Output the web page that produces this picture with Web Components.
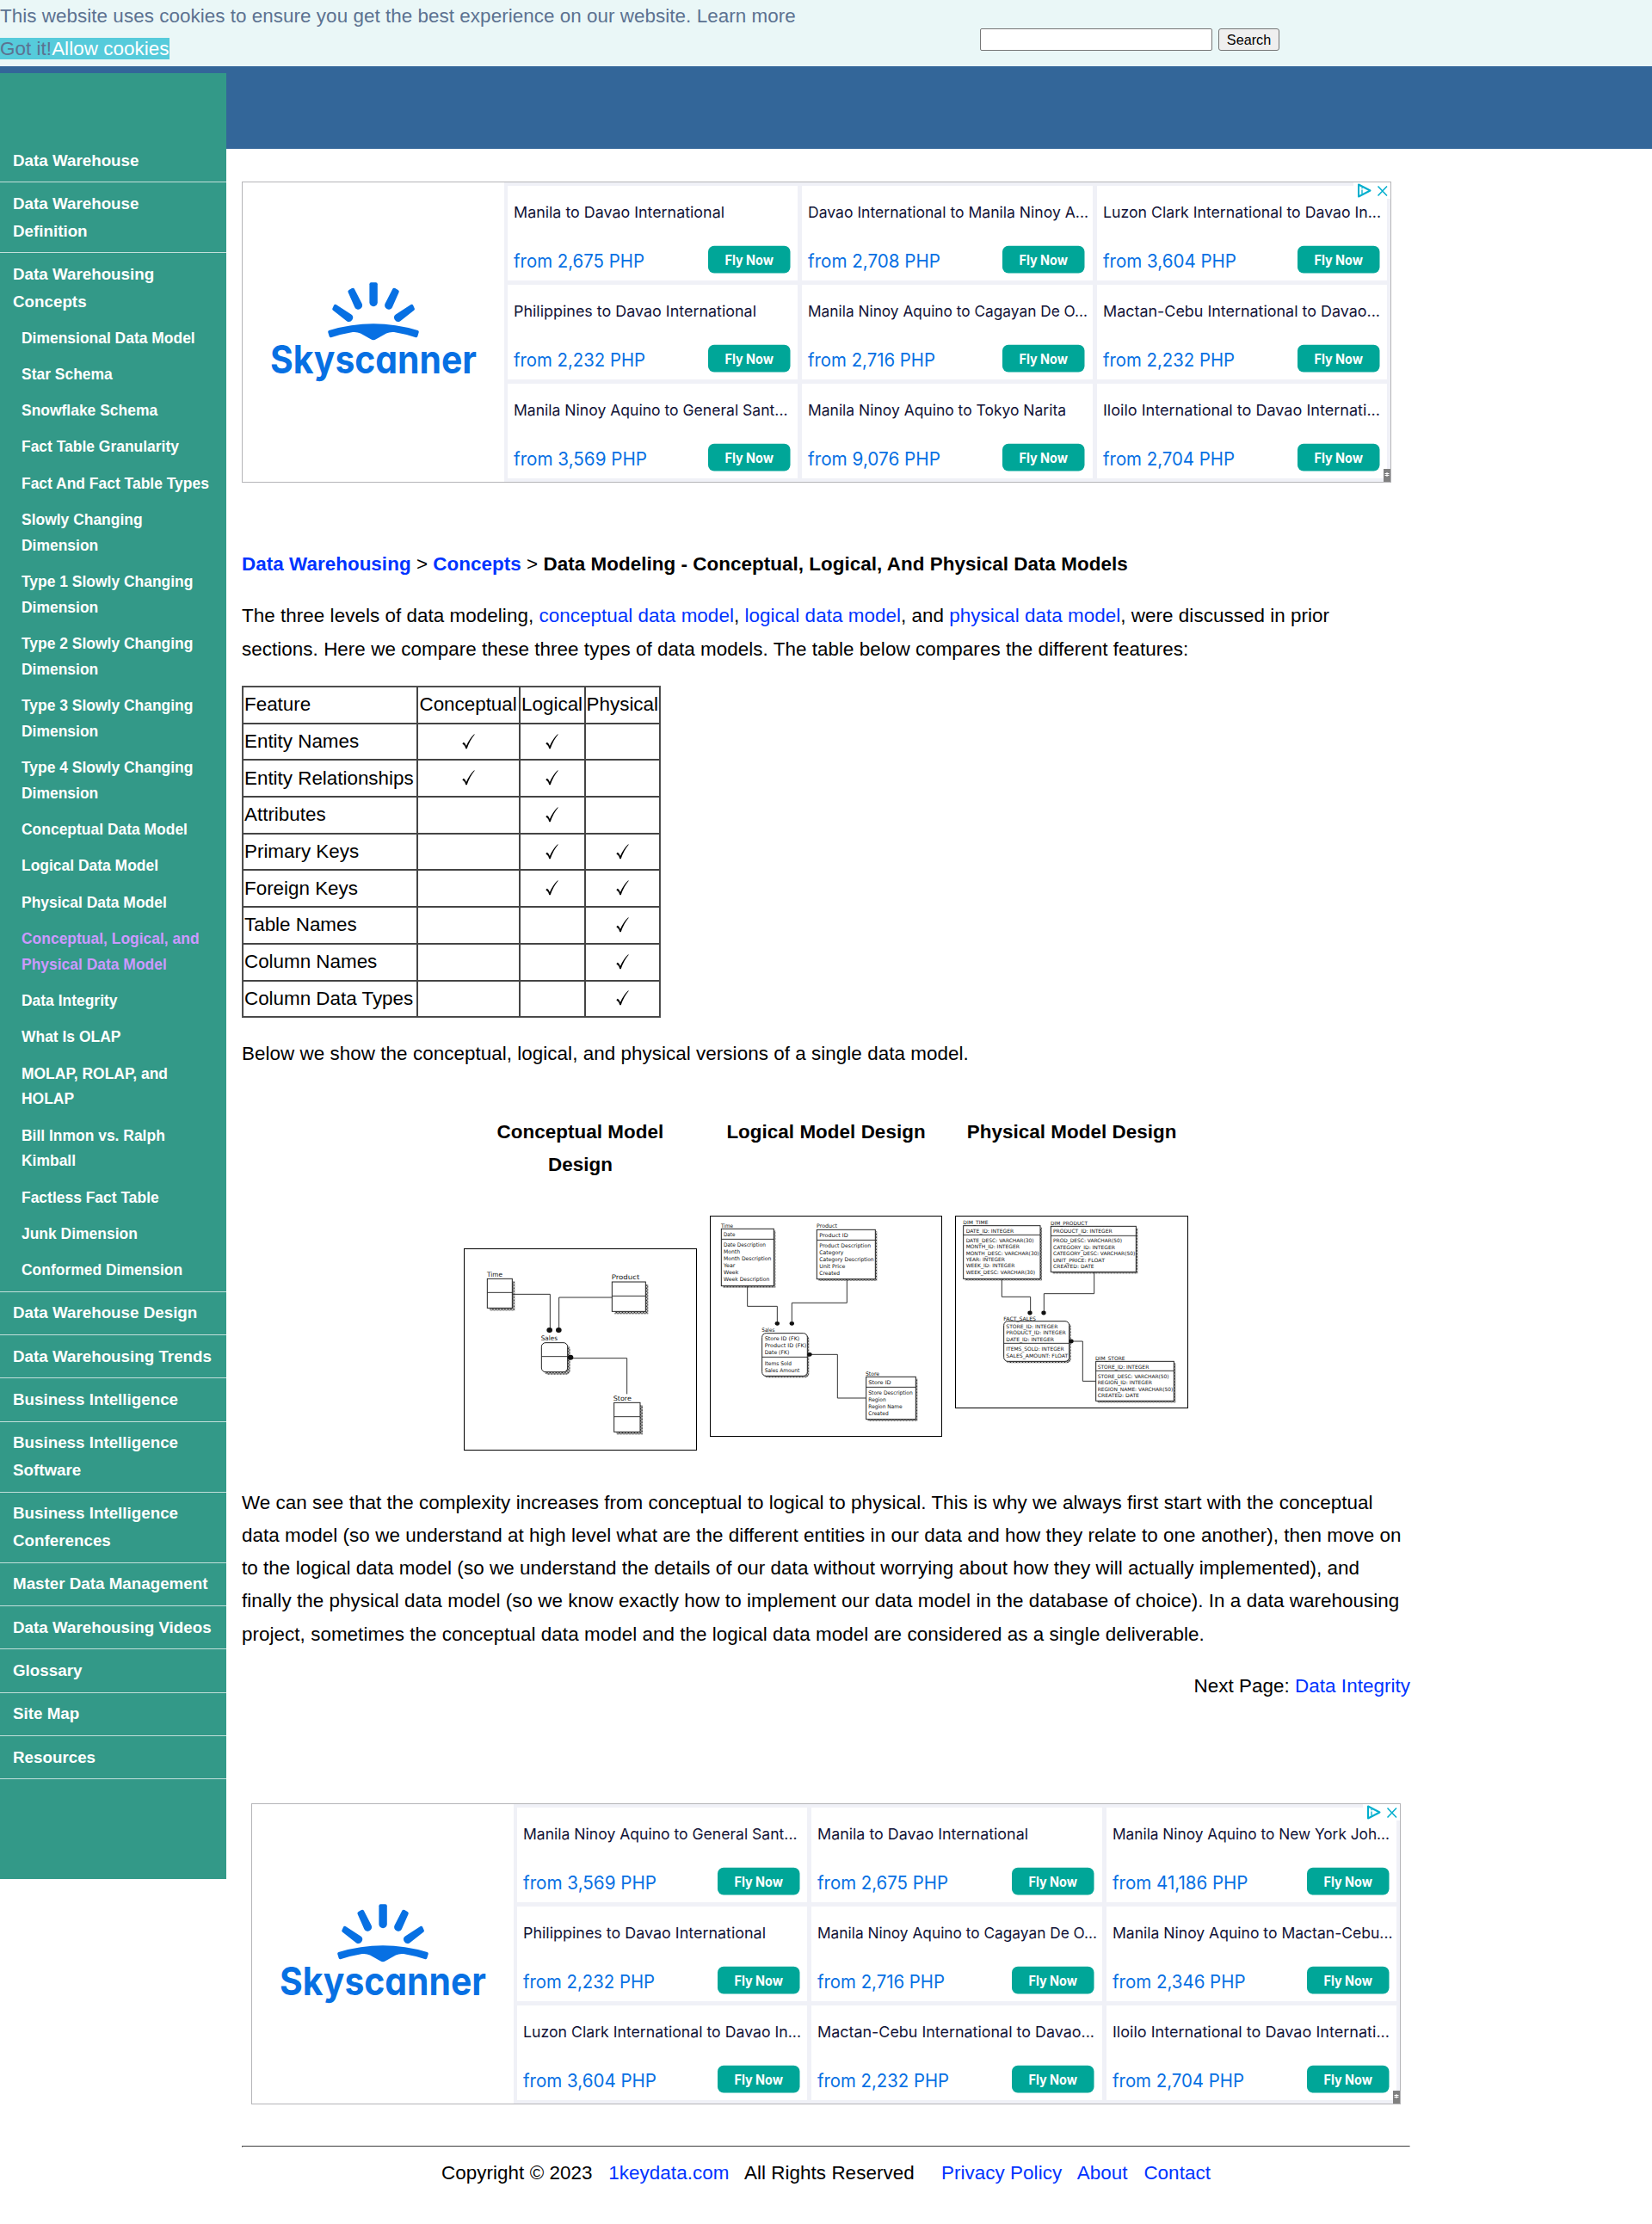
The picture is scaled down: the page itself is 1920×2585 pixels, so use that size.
<!DOCTYPE html>
<html lang="en">
<head>
<meta charset="utf-8">
<title>Data Modeling - Conceptual, Logical, And Physical Data Models</title>
<style>
body{margin:0;background:#fff;color:#000;font:22.4px/38.08px "Liberation Sans",Arial,sans-serif;letter-spacing:.055px}
</style>
</head>
<body>
<key-page></key-page>
<script>
const define=(name,html,setup)=>customElements.define(name,class extends HTMLElement{
  connectedCallback(){
    if(this.shadowRoot)return;
    const t=document.createElement('template');
    t.innerHTML=html;
    this.attachShadow({mode:'open'}).append(t.content.cloneNode(true));
    if(setup)setup(this,this.shadowRoot);
  }
});

define('cookie-bar',`<style>
:host{display:flex;height:77px;background:#eaf7f7;color:#5c7291}
.msg{flex:0 0 1139px}
.btn{background:#56cbdb}.allow{color:#fff}
form{display:flex;gap:7px;padding-top:33px;height:26px}
input{box-sizing:border-box;width:270px;height:26px;border:1px solid #767676;border-radius:2px;background:#fff;padding:0}
button{box-sizing:border-box;width:71px;height:26px;border:1px solid #767676;border-radius:3px;background:#efefef;color:#000;padding:0;font:16.2px "Liberation Sans",Arial,sans-serif}
</style><div class="msg"><div>This website uses cookies to ensure you get the best experience on our website. Learn more</div><div><span class="btn">Got it!</span><span class="btn allow">Allow cookies</span></div></div>
<form><input type="text"><button type="button">Search</button></form>`);

define('nav-item',`<style>
:host{display:block;padding:8.8px 0 8.8px 15px;border-bottom:1px solid #c2dfda;font:bold 18.8px/31.73px "Liberation Sans",Arial,sans-serif;letter-spacing:0;color:#fff}
</style><slot></slot>`);
define('nav-sub',`<style>
:host{display:block;padding:6.28px 0 6.28px 10px;font:bold 17.47px/29.75px "Liberation Sans",Arial,sans-serif}
:host([active]){color:#c9f}
:host(:first-of-type){margin-top:5.6px}
:host(:last-of-type){margin-bottom:-6.4px}
</style><slot></slot>`);
define('side-nav',`<style>
:host{display:block;box-sizing:border-box;background:#398;padding-top:77px}
</style>
<nav-item>Data Warehouse</nav-item>
<nav-item>Data Warehouse<br>Definition</nav-item>
<nav-item>Data Warehousing<br>Concepts
<nav-sub>Dimensional Data Model</nav-sub><nav-sub>Star Schema</nav-sub><nav-sub>Snowflake Schema</nav-sub><nav-sub>Fact Table Granularity</nav-sub><nav-sub>Fact And Fact Table Types</nav-sub><nav-sub>Slowly Changing<br>Dimension</nav-sub><nav-sub>Type 1 Slowly Changing<br>Dimension</nav-sub><nav-sub>Type 2 Slowly Changing<br>Dimension</nav-sub><nav-sub>Type 3 Slowly Changing<br>Dimension</nav-sub><nav-sub>Type 4 Slowly Changing<br>Dimension</nav-sub><nav-sub>Conceptual Data Model</nav-sub><nav-sub>Logical Data Model</nav-sub><nav-sub>Physical Data Model</nav-sub><nav-sub active>Conceptual, Logical, and<br>Physical Data Model</nav-sub><nav-sub>Data Integrity</nav-sub><nav-sub>What Is OLAP</nav-sub><nav-sub>MOLAP, ROLAP, and<br>HOLAP</nav-sub><nav-sub>Bill Inmon vs. Ralph<br>Kimball</nav-sub><nav-sub>Factless Fact Table</nav-sub><nav-sub>Junk Dimension</nav-sub><nav-sub>Conformed Dimension</nav-sub></nav-item>
<nav-item>Data Warehouse Design</nav-item><nav-item>Data Warehousing Trends</nav-item><nav-item>Business Intelligence</nav-item><nav-item>Business Intelligence<br>Software</nav-item><nav-item>Business Intelligence<br>Conferences</nav-item><nav-item>Master Data Management</nav-item><nav-item>Data Warehousing Videos</nav-item><nav-item>Glossary</nav-item><nav-item>Site Map</nav-item><nav-item>Resources</nav-item>`);

/* Text stretched to a given width, so that the substitute face keeps the brand face's measure. */
const fitted=(x,y,w,text)=>`<text x="${x}" y="${y}" textLength="${w}" lengthAdjust="spacingAndGlyphs">${text}</text>`;

define('fare-card',`<style>
:host{display:block;background:#fff;letter-spacing:0}
svg{display:block;overflow:visible;font-family:Inter,sans-serif}
.t{font-size:17.6px;fill:#111236}.p{font-size:21px;fill:#0770e3}.b{font-size:16px;font-weight:700;fill:#fff}
</style><svg width="337" height="110"></svg>`,(el,root)=>{
  const [t,tw,p,pw]=el.getAttribute('fare').split('|');
  root.querySelector('svg').innerHTML=`<g class="t">${fitted(7,36.6,tw,t)}</g><g class="p">${fitted(7,94.8,pw,'from '+p+' PHP')}</g><rect x="233" y="69.7" width="95.5" height="31.8" rx="7" fill="#00a698"/><g class="b">${fitted(252.5,92.3,56.5,'Fly Now')}</g>`;
});

define('fare-ad',`<style>
:host{display:flex;box-sizing:border-box;width:1336px;height:350px;border:1px solid #b5b5b8;position:relative;background:#fff;letter-spacing:0}
.logo{flex:0 0 304px;height:348px}
.logo text{font:700 45px Inter,sans-serif;font-feature-settings:"cv11","ss03"}
.grid{flex:1;display:grid;grid-template-columns:repeat(3,337.4px);grid-auto-rows:110px;gap:5px;padding:4px;background:#f0f1f7}
.choices{position:absolute;right:0;top:0}
.mark{position:absolute;right:0;bottom:0}
</style>
<svg class="logo" viewBox="0 0 304 348" fill="#0770e3"><path d="M147.400 118.300q0-2 2-2h5.400q2 0 2 2v21.200a4.700 4.700 0 0 1-9.400 0z"/>
<g id="rays"><path d="M122.600 127.800q-.8-1.800 1-2.800l3.400-1.900q2-.9 3 .9l8.700 17a4.700 4.700 0 0 1-8.400 4.200z"/><path d="M104.800 148.500q-.9-.8-.4-2l1.700-3.700q.9-1.600 2.500-.7l17.700 11.400a4.700 4.700 0 0 1-5 7.900z"/></g>
<g transform="matrix(-1 0 0 1 304.200 0)"><path d="M122.600 127.800q-.8-1.800 1-2.800l3.400-1.900q2-.9 3 .9l8.700 17a4.700 4.700 0 0 1-8.400 4.200z"/><path d="M104.800 148.500q-.9-.8-.4-2l1.700-3.700q.9-1.600 2.500-.7l17.700 11.400a4.700 4.700 0 0 1-5 7.900z"/></g>
<path d="M100.500 172Q152 156.500 203.500 172Q205 172.500 204.800 174L203.300 179Q202.500 180.700 200.500 180Q188 176 176 174Q171 173.500 167 175.500L155 182.300Q152 184 149 182.300L137 175.500Q133 173.500 128 174Q116 176 103.500 180Q101.500 180.700 100.700 179L99.200 174Q99 172.500 100.500 172z"/>
<text x="32" y="221.800" textLength="240" lengthAdjust="spacingAndGlyphs">Skyscanner</text></svg>
<div class="grid"></div>
<svg class="choices" width="43" height="19"><rect width="43" height="19" fill="#fff"/><path d="M6 2.500v14l13.500-7z" fill="none" stroke="#00aecd" stroke-width="2" stroke-linejoin="round"/><path d="M10 8.500v5M10 6v1.200" stroke="#00aecd" stroke-width="1.300"/><path d="M28.500 4.500l10.500 11M39 4.500L28.500 15.500" stroke="#00aecd" stroke-width="1.500"/></svg>
<svg class="mark" width="8" height="15"><rect width="8" height="15" fill="#808080"/><path d="M4 4v5M1.500 5.500h5M1.500 7.500h5" stroke="#fff"/></svg>`,
(el,root)=>{
  root.querySelector('.grid').innerHTML=el.getAttribute('fares').split(';').map(f=>`<fare-card fare="${f}"></fare-card>`).join('');
});

define('er-diagram',`<style>
:host{display:block;font-weight:400;letter-spacing:0}svg{display:block;font-family:"DejaVu Sans",sans-serif;box-sizing:border-box;border:1px solid #000}
</style>`,(el,root)=>{
  const d=diagrams[el.getAttribute('model')];
  const [ox,oy,w,h]=d.view;
  let s=`<defs><pattern id="dots" width="4.200" height="4.200" patternUnits="userSpaceOnUse"><path d="M0 0h2.100v2.100h-2.100zM2.100 2.100h2.100v2.100h-2.100z" fill="#111"/></pattern></defs>`;
  const shape=(x1,y1,x2,y2,r,o,f)=>`<rect x="${x1+o}" y="${y1+o}" width="${x2-x1}" height="${y2-y1}" rx="${r}" ${f}/>`;
  for(const [title,tx,ty,tw,x1,y1,x2,y2,div,r,rx,...rows] of d.entities){
    s+=shape(x1,y1,x2,y2,r,d.shadow,'fill="url(#dots)"')+shape(x1,y1,x2,y2,r,0,'fill="#fff" stroke="#222" stroke-width="3"');
    s+=`<path d="M${x1} ${div}H${x2}" stroke="#333" stroke-width="3"/>`+fitted(tx,ty,tw,title);
    for(const [t,tw2,y] of rows)s+=fitted(rx,y,tw2,t);
  }
  for(const p of d.lines)s+=`<path d="M${p}" fill="none" stroke="#333" stroke-width="3"/>`;
  for(const [x,y] of d.dots)s+=`<ellipse cx="${x}" cy="${y}" rx="${d.dot}" ry="${d.dot*.9}"/>`;
  root.innerHTML+=`<svg width="${w/3}" height="${h/3}" viewBox="${ox+3} ${oy+3} ${w-6} ${h-6}" font-size="${d.size}" fill="#111">${s}</svg>`;
});
const diagrams={
conceptual:{view:[27,483,813,705],size:23,shadow:9,dot:10,entities:[
 ['Time',108,582,54,109,589,196,691,637,0,0],
 ['Product',542,592,98,544,600,661,703,649,0,0],
 ['Sales',296,805,58,298,812,389,914,860,14,0],
 ['Store',548,1015,64,551,1021,642,1123,1070,0,0]],
 lines:['196 643H328V768','544 654H359V768','596 991V866H399'],dots:[[326,768],[358,768],[399,863]]},
logical:{view:[15,69,810,771],size:19,shadow:6,dot:8,entities:[
 ['Time',54,110,42,55,115,238,314,151,0,63,['Date',40,140],['Date Description',147,177],['Month',57,201],['Month Description',166,225],['Year',40,249],['Week',52,274],['Week Description',160,298]],
 ['Product',387,112,72,388,118,592,290,154,0,397,['Product ID',100,143],['Product Description',179,180],['Category',84,204],['Category Description',190,228],['Unit Price',90,252],['Created',71,276]],
 ['Sales',196,473,45,197,479,355,628,562,14,206,['Store ID (FK)',122,504],['Product ID (FK)',146,528],['Date (FK)',86,552],['Items Sold',94,590],['Sales Amount',122,615]],
 ['Store',558,626,48,560,631,733,779,667,0,568,['Store ID',79,656],['Store Description',154,692],['Region',61,716],['Region Name',118,741],['Created',70,765]]],
 lines:['146 314V385H250V445','493 290V373H301V445','560 705H460V553H363'],dots:[[250,445],[301,445],[363,553]]},
physical:{view:[30,69,813,672],size:18,shadow:6,dot:8,entities:[
 ['DIM_TIME',58,100,88,59,104,327,289,136,0,68,['DATE_ID: INTEGER',167,129],['DATE_DESC: VARCHAR(30)',237,161],['MONTH_ID: INTEGER',187,183],['MONTH_DESC: VARCHAR(30)',255,206],['YEAR: INTEGER',136,227],['WEEK_ID: INTEGER',170,250],['WEEK_DESC: VARCHAR(30)',241,272]],
 ['DIM_PRODUCT',363,102,129,364,106,661,265,139,0,372,['PRODUCT_ID: INTEGER',206,130],['PROD_DESC: VARCHAR(50)',240,163],['CATEGORY_ID: INTEGER',216,186],['CATEGORY_DESC: VARCHAR(50)',286,208],['UNIT_PRICE: FLOAT',180,230],['CREATED: DATE',143,252]],
 ['FACT_SALES',199,434,113,200,437,428,577,514,14,208,['STORE_ID: INTEGER',180,461],['PRODUCT_ID: INTEGER',208,484],['DATE_ID: INTEGER',167,506],['ITEMS_SOLD: INTEGER',202,541],['SALES_AMOUNT: FLOAT',216,563]],
 ['DIM_STORE',519,574,104,521,577,793,715,610,0,527,['STORE_ID: INTEGER',179,602],['STORE_DESC: VARCHAR(50)',249,635],['REGION_ID: INTEGER',190,657],['REGION_NAME: VARCHAR(50)',263,680],['CREATED: DATE',145,702]]],
 lines:['193 289V352H293V408','515 265V341H340V408','521 646H475V507H435'],dots:[[291,408],[339,408],[435,507]]}
};

define('check-mark',`<style>:host{display:inline-block;vertical-align:middle;margin-bottom:3px}svg{display:block}</style>
<svg width="15" height="18" viewBox="0 0 15 18" role="img" aria-label="yes"><path d="M.3 11.200L1.900 9.800Q4 11.200 4.900 14Q8.500 5.500 14.200.2L14.700.7Q8.800 7.500 5.700 17.300H4.300Q3.100 12.800.3 11.200z"/></svg>`);

define('feature-table',`<style>
:host{display:block;height:386.400px;margin-top:23.400px}
table{border-collapse:separate;border-spacing:0;border:1px solid #555;box-sizing:border-box;width:487px;height:386px;letter-spacing:0}
td{border:1px solid #444;padding:0 1px;height:42.700px;box-sizing:border-box;line-height:38px}
td+td{text-align:center}
</style><table><colgroup><col style="width:203px"><col style="width:119px"><col style="width:76px"><col style="width:87px"></colgroup></table>`,(el,root)=>{
  const rows=[['Entity Names',1,1,0],['Entity Relationships',1,1,0],['Attributes',0,1,0],['Primary Keys',0,1,1],['Foreign Keys',0,1,1],['Table Names',0,0,1],['Column Names',0,0,1],['Column Data Types',0,0,1]];
  root.querySelector('table').insertAdjacentHTML('beforeend','<tr><td>Feature</td><td>Conceptual</td><td>Logical</td><td>Physical</td></tr>'+rows.map(([n,...c])=>`<tr><td>${n}</td>${c.map(v=>`<td>${v?'<check-mark></check-mark>':''}</td>`).join('')}</tr>`).join(''));
});

define('model-column',`<style>
:host{display:flex;flex-direction:column;width:271px;text-align:center;font-weight:bold}
.h{padding:0 5px 78px}
</style><div class="h"><slot></slot></div><slot name="figure"></slot>`);

define('page-footer',`<style>
:host{display:block;text-align:center}
hr{margin:0 0 11px;border:1px inset #999;border-color:#999 #eee #eee #999}
a{color:#03f}
</style><hr>Copyright © 2023 &nbsp; <a>1keydata.com</a> &nbsp; All Rights Reserved &nbsp; &nbsp; <a>Privacy Policy</a> &nbsp; <a>About</a> &nbsp; <a>Contact</a>`);

define('page-article',`<style>
:host{display:block;width:1358px;padding:38px 0 0 18px}
p{margin:0 0 22.400px}a{color:#03f}
.crumb{margin-top:76px}
.models{display:flex;justify-content:center;gap:14.600px;margin:53px 0 41.500px;align-items:flex-start}
.after{margin-top:22.400px}
.long{line-height:38.300px}
.next{text-align:right;margin-bottom:116.500px}
.second{margin-left:11px}
page-footer{margin-top:48.500px}
</style>
<fare-ad fares="Manila to Davao International|245|2,675|152;Davao International to Manila Ninoy A...|326|2,708|154;Luzon Clark International to Davao In...|323|3,604|155;Philippines to Davao International|282|2,232|153;Manila Ninoy Aquino to Cagayan De O...|325|2,716|148;Mactan-Cebu International to Davao...|322|2,232|153;Manila Ninoy Aquino to General Sant...|318.5|3,569|155;Manila Ninoy Aquino to Tokyo Narita|300|9,076|154;Iloilo International to Davao Internati...|322|2,704|153"></fare-ad>
<p class="crumb"><b><a>Data Warehousing</a></b> &gt; <b><a>Concepts</a></b> &gt; <b>Data Modeling - Conceptual, Logical, And Physical Data Models</b></p>
<p>The three levels of data modeling, <a>conceptual data model</a>, <a>logical data model</a>, and <a>physical data model</a>, were discussed in prior<br>sections. Here we compare these three types of data models. The table below compares the different features:</p>
<feature-table></feature-table>
<p class="after">Below we show the conceptual, logical, and physical versions of a single data model.</p>
<div class="models"><model-column>Conceptual Model Design<er-diagram slot="figure" model="conceptual"></er-diagram></model-column><model-column>Logical Model Design<er-diagram slot="figure" model="logical"></er-diagram></model-column><model-column>Physical Model Design<er-diagram slot="figure" model="physical"></er-diagram></model-column></div>
<p class="long">We can see that the complexity increases from conceptual to logical to physical. This is why we always first start with the conceptual<br>data model (so we understand at high level what are the different entities in our data and how they relate to one another), then move on<br>to the logical data model (so we understand the details of our data without worrying about how they will actually implemented), and<br>finally the physical data model (so we know exactly how to implement our data model in the database of choice). In a data warehousing<br>project, sometimes the conceptual data model and the logical data model are considered as a single deliverable.</p>
<p class="next">Next Page: <a>Data Integrity</a></p>
<fare-ad class="second" fares="Manila Ninoy Aquino to General Sant...|318.5|3,569|155;Manila to Davao International|245|2,675|152;Manila Ninoy Aquino to New York Joh...|322|41,186|157.5;Philippines to Davao International|282|2,232|153;Manila Ninoy Aquino to Cagayan De O...|325|2,716|148;Manila Ninoy Aquino to Mactan-Cebu...|325.5|2,346|154.5;Luzon Clark International to Davao In...|323|3,604|155;Mactan-Cebu International to Davao...|322|2,232|153;Iloilo International to Davao Internati...|322|2,704|153"></fare-ad>
<page-footer></page-footer>`);

define('key-page',`<style>
:host{display:block;height:2585px;overflow:hidden}
.frame{display:grid;grid-template-columns:263px 1fr;grid-template-rows:96px auto}
header{grid-area:1/1/2/3;background:#369}
side-nav{grid-area:1/1/3/2;margin-top:8px;height:2099px}
page-article{grid-area:2/2/3/3}
</style><cookie-bar></cookie-bar><div class="frame"><header></header><side-nav></side-nav><page-article></page-article></div>`);
</script>
</body>
</html>
